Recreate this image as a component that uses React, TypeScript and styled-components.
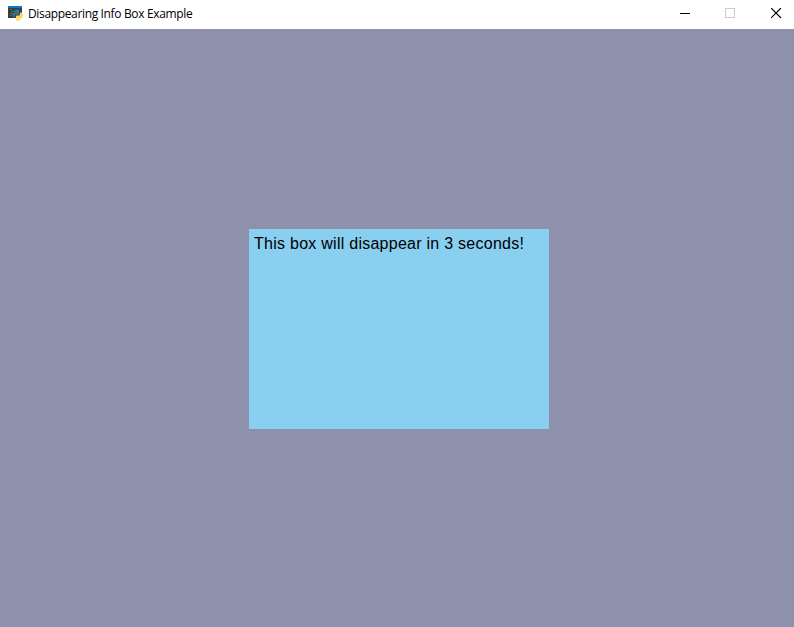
import React from "react";
import styled, { createGlobalStyle } from "styled-components";

const GlobalStyle = createGlobalStyle`
  body { margin: 0; overflow: hidden; }
`;

const Window = styled.div`
  width: 794px;
  height: 627px;
  display: flex;
  flex-direction: column;
  background: #8d91ac;
`;

const TitleBar = styled.header`
  height: 29px;
  flex: none;
  display: flex;
  background: #fff;
  padding-left: 7px;
`;

const AppIcon = styled.svg`
  width: 16px;
  height: 16px;
  margin-top: 5px;
  flex: none;
`;

const Title = styled.div`
  flex: 1;
  margin-left: 5px;
  font: 12px/28px "Open Sans", sans-serif;
  letter-spacing: -0.35px;
  color: #000;
  white-space: nowrap;
`;

const Controls = styled.div`
  display: flex;
  margin-right: -5px;
`;

const ControlButton = styled.button<{ $muted?: boolean }>`
  width: 46px;
  height: 27px;
  padding: 0;
  border: 0;
  background: transparent;
  display: flex;
  align-items: center;
  justify-content: center;
  color: ${(p) => (p.$muted ? "#ccc" : "#000")};
`;

const Glyph = styled.svg`
  display: block;
  width: 11px;
  height: 11px;
`;

const Canvas = styled.main`
  flex: 1;
  display: flex;
  justify-content: center;
  align-items: flex-start;
  padding: 200px 0 0 4px;
`;

const InfoBox = styled.div`
  box-sizing: border-box;
  width: 300px;
  height: 200px;
  padding: 5px;
  background: #89cff0;
  font: 16px/19px "Liberation Sans", Arial, sans-serif;
  letter-spacing: 0.26px;
  color: #000;
  white-space: nowrap;
`;

export default function App() {
  return (
    <Window>
      <GlobalStyle />
      <TitleBar>
        <AppIcon viewBox="0 0 16 16">
          <path d="M1 1h14v12H1z" fill="#3a3e40" />
          <path d="M1 1h14v2H1z" fill="#0078d4" />
          <path d="M3 4.5h2M4 6.5h4M3 8.5h3M3 10.5h2" stroke="#35803c" />
          <path d="M7.8 5.8q0-1.3 2.2-1.3t2.2 1.3v2.6q0 1.2-1.2 1.2H9q-1.3 0-1.3 1.3v1.6h-.6q-1.5 0-1.5-2.4t1.5-2.4h3v-.5H7.8z" fill="#3874a8" />
          <path d="M13 7.5h1.1q1.8 0 1.8 2.7t-1.8 2.7h-2.4v.6h2v.9q0 1.4-2.4 1.4t-2.4-1.4v-2.7q0-1.2 1.2-1.2h1.7q1.2 0 1.2-1.2z" fill="#ffd966" />
        </AppIcon>
        <Title>Disappearing Info Box Example</Title>
        <Controls>
          <ControlButton aria-label="Minimize">
            <Glyph viewBox="0 0 11 11" shapeRendering="crispEdges"><path d="M1 5h10v1H1z" fill="currentColor" /></Glyph>
          </ControlButton>
          <ControlButton aria-label="Maximize" $muted>
            <Glyph viewBox="0 0 11 11"><rect x=".5" y=".5" width="9" height="9" fill="none" stroke="currentColor" /></Glyph>
          </ControlButton>
          <ControlButton aria-label="Close">
            <Glyph viewBox="0 0 11 11"><path d="M.5 .5l9 9M9.5 .5l-9 9" stroke="currentColor" strokeWidth="1.2" strokeLinecap="square" /></Glyph>
          </ControlButton>
        </Controls>
      </TitleBar>
      <Canvas>
        <InfoBox>This box will disappear in 3 seconds!</InfoBox>
      </Canvas>
    </Window>
  );
}
